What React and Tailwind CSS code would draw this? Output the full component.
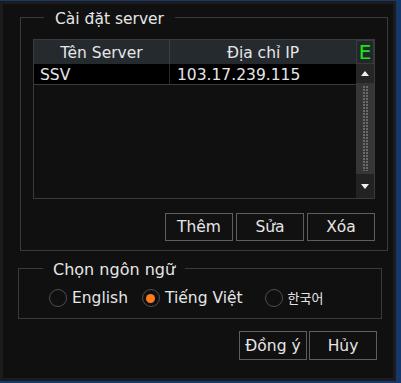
const font = { fontFamily: '"DejaVu Sans", Verdana, sans-serif' };

function Radio({ label, checked, small }) {
  return (
    <label className="flex items-center gap-[5px]">
      <span className="flex h-[18px] w-[18px] items-center justify-center rounded-full border-[1.5px] border-[#4e4e4e]">
        {checked && <span className="h-[9px] w-[9px] rounded-full bg-[#ff7a1f]" />}
      </span>
      <span
        className={small ? 'text-[13px] leading-[18px]' : 'text-[15.5px] leading-[18px]'}
        style={small ? { fontFamily: '"Noto Sans CJK KR", sans-serif' } : undefined}
      >
        {label}
      </span>
    </label>
  );
}

function Btn({ children }) {
  return (
    <button className="h-[28px] w-[68px] border border-[#5e5e5e] bg-[#111111] pt-[2px] text-[15.5px] text-[#e6e6e6]">
      {children}
    </button>
  );
}

export default function App() {
  return (
    <div className="h-[383px] w-[401px] bg-[#17386a] pt-px pr-[5px] pb-[2px]" style={font}>
      <div className="flex h-full flex-col border-[3px] border-[#1c1c1c] bg-[#101010] text-[#e6e6e6]">
        {/* Server settings */}
        <fieldset className="ml-[17px] mt-[2px] h-[245px] w-[367px] border border-[#3a3a3a] px-[12px]">
          <legend className="ml-[11px] px-[11px] pt-[4px] text-[15.5px] leading-[18px]">Cài đặt server</legend>

          <div className="mt-[11px] flex h-[160px] w-[342px] border border-[#3a3a3a]">
            <div className="flex flex-1 flex-col">
              <div className="flex h-[24px] bg-[#252a2f] pt-[3px] text-[15.5px] leading-[21px]">
                <div className="-mt-[3px] w-[136px] border-r border-[#3a3f44] pt-[3px] text-center">Tên Server</div>
                <div className="flex-1 text-center">Địa chỉ IP</div>
              </div>
              <div className="flex h-[21px] border-b border-[#3a3a3a] bg-black pt-[2px] text-[15.5px] leading-[18px]">
                <div className="-mt-[2px] w-[136px] border-r border-[#2a2a2a] pl-[6px] pt-[2px]">SSV</div>
                <div className="flex-1 pl-[7px]">103.17.239.115</div>
              </div>
            </div>
            <div className="flex w-[18px] flex-col">
              <div className="flex h-[24px] items-center justify-center border border-[#3a3a3a] bg-[#22272b] text-[20px] leading-none text-[#19e619]">
                E
              </div>
              <div className="flex h-[19px] items-center justify-center bg-[#262626]">
                <svg width="8" height="5" viewBox="0 0 8 5">
                  <path d="M4 0L8 5H0z" fill="#f2f2f2" />
                </svg>
              </div>
              <div className="flex flex-1 justify-center gap-[1px] bg-[#363636] py-[3px]">
                <div className="w-[2px] bg-[repeating-linear-gradient(to_bottom,#6a6a6a_0_2px,transparent_2px_3px)]" />
                <div className="w-[2px] bg-[repeating-linear-gradient(to_bottom,#6a6a6a_0_2px,transparent_2px_3px)]" />
              </div>
              <div className="flex h-[24px] items-center justify-center bg-[#222222]">
                <svg width="8" height="5" viewBox="0 0 8 5">
                  <path d="M0 0H8L4 5z" fill="#f2f2f2" />
                </svg>
              </div>
            </div>
          </div>

          <div className="mt-[14px] flex w-[342px] justify-end gap-[3px]">
            <Btn>Thêm</Btn>
            <Btn>Sửa</Btn>
            <Btn>Xóa</Btn>
          </div>
        </fieldset>

        {/* Language */}
        <fieldset className="ml-[15px] mt-[6px] h-[62px] w-[364px] border border-[#3a3a3a]">
          <legend className="ml-[24px] px-[10px] pt-[4px] text-[16px] leading-[18px]">Chọn ngôn ngữ</legend>
          <div className="ml-[30px] mt-[10px] flex items-center">
            <Radio label="English" />
            <div className="ml-[14px]">
              <Radio label="Tiếng Việt" checked />
            </div>
            <div className="ml-[22px]">
              <Radio label="한국어" small />
            </div>
          </div>
        </fieldset>

        <div className="mr-[16px] mt-[12px] flex justify-end gap-[2px]">
          <button className="h-[29px] w-[68px] border border-[#5e5e5e] pt-[2px] text-[15.5px]">Đồng ý</button>
          <button className="h-[29px] w-[68px] border border-[#5e5e5e] pt-[2px] text-[15.5px]">Hủy</button>
        </div>
      </div>
    </div>
  );
}
